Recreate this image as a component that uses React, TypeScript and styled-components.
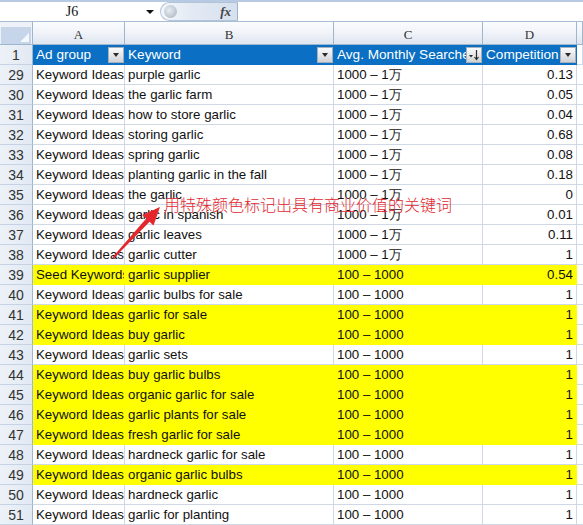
import React from "react";
import styled, { createGlobalStyle } from "styled-components";

const GlobalStyle = createGlobalStyle`
  html, body { margin: 0; padding: 0; background: #ffffff; overflow: hidden; }
  #root { width: 583px; height: 525px; position: relative; overflow: hidden; }
`;

const COLS = "33px 92px 209px 149px 94px 1fr";
const GRID = "#d0d7e5";
const HEAD_LINE = "#9eb6ce";
const YELLOW = "#ffff00";
const BLUE = "#0b6fc3";
const CELL_FONT = `"Liberation Sans", Arial, sans-serif`;
const SERIF = `"Liberation Serif", "Times New Roman", serif`;

const Sheet = styled.div`
  width: 583px;
  height: 525px;
  position: relative;
  overflow: hidden;
`;

const FormulaBar = styled.div`
  display: flex;
  align-items: stretch;
  height: 19px;
  border-top: 2px solid #b7cae4;
  border-bottom: 1px solid #a9bdd8;
  background: #ffffff;
`;

const NameBox = styled.div`
  width: 140px;
  display: flex;
  align-items: center;
  justify-content: center;
  font-family: ${SERIF};
  font-size: 14px;
  color: #111;
  padding-left: 2px;
`;

const DropArrow = styled.div`
  width: 16px;
  display: flex;
  align-items: center;
  justify-content: center;
  &::after {
    content: "";
    border-left: 4px solid transparent;
    border-right: 4px solid transparent;
    border-top: 4px solid #111;
  }
`;

const FxCapsule = styled.div`
  width: 78px;
  margin-left: 2px;
  display: flex;
  align-items: center;
  justify-content: space-between;
  border: 1px solid #b3c3d8;
  border-right: 1px solid #9fb2cc;
  border-radius: 10px 0 0 10px;
  background: linear-gradient(90deg, #f4f7fb 0%, #e3eaf4 40%, #d6e0ee 100%);
  box-sizing: border-box;
  padding: 0 6px 0 3px;
`;

const Knob = styled.div`
  width: 13px;
  height: 13px;
  border-radius: 50%;
  background: radial-gradient(circle at 40% 40%, #e9edf2 0%, #b9c1cc 70%, #a4adba 100%);
`;

const FxLabel = styled.span`
  font-family: ${SERIF};
  font-style: italic;
  font-weight: bold;
  font-size: 13px;
  color: #444;
`;

const FormulaInput = styled.div`
  flex: 1;
  background: #ffffff;
`;

const Row = styled.div`
  display: grid;
  grid-template-columns: ${COLS};
  height: 20px;
`;

const HeaderRow = styled(Row)`
  height: 23px;
`;

const Corner = styled.div`
  box-sizing: border-box;
  border-right: 1px solid ${HEAD_LINE};
  border-bottom: 1px solid ${HEAD_LINE};
  background: #eef2f8;
  padding: 5px 1px 0 1px;
  display: flex;
`;

const CornerInner = styled.div`
  flex: 1;
  background: #c7d5ea;
  position: relative;
  &::after {
    content: "";
    position: absolute;
    right: 2px;
    bottom: 2px;
    border-left: 9px solid transparent;
    border-bottom: 9px solid #f4f7fb;
  }
`;

const ColHead = styled.div`
  box-sizing: border-box;
  border-right: 1px solid ${HEAD_LINE};
  border-bottom: 1px solid ${HEAD_LINE};
  background: linear-gradient(180deg, #fbfcfe 0%, #f1f4f9 45%, #dfe6f0 100%);
  font-family: ${SERIF};
  font-size: 13px;
  color: #333;
  display: flex;
  align-items: center;
  justify-content: center;
  padding-top: 3px;
`;

const RowNum = styled.div`
  box-sizing: border-box;
  border-right: 1px solid ${HEAD_LINE};
  border-bottom: 1px solid #c6d3e4;
  background: linear-gradient(90deg, #edf2f8 0%, #e2e9f3 100%);
  font-family: ${CELL_FONT};
  font-size: 14px;
  color: #333;
  display: flex;
  align-items: center;
  justify-content: center;
  padding-top: 1px;
`;

const Cell = styled.div<{ $fill?: string; $right?: boolean }>`
  box-sizing: border-box;
  border-right: 1px solid ${(p) => p.$fill ?? GRID};
  border-bottom: 1px solid ${(p) => p.$fill ?? GRID};
  background: ${(p) => p.$fill ?? "#ffffff"};
  font-family: ${CELL_FONT};
  font-size: 13.3px;
  color: #111;
  line-height: 19px;
  padding: 0 3px;
  white-space: nowrap;
  overflow: hidden;
  text-align: ${(p) => (p.$right ? "right" : "left")};
`;

const TitleCell = styled.div<{ $plain?: boolean }>`
  box-sizing: border-box;
  display: flex;
  align-items: center;
  background: ${(p) => (p.$plain ? "#ffffff" : BLUE)};
  border-bottom: 1px solid ${(p) => (p.$plain ? GRID : BLUE)};
  border-right: 1px solid ${(p) => (p.$plain ? GRID : BLUE)};
  padding-left: 3px;
  overflow: hidden;
`;

const TitleText = styled.span`
  flex: 1;
  min-width: 0;
  overflow: hidden;
  white-space: nowrap;
  font-family: ${CELL_FONT};
  font-size: 13.6px;
  color: #ffffff;
`;

const FilterButton = styled.div`
  flex: none;
  width: 16px;
  height: 16px;
  box-sizing: border-box;
  border: 1px solid #a8b0bb;
  background: linear-gradient(180deg, #fbfbfb 0%, #e6e7e9 50%, #cfd2d6 100%);
  display: flex;
  align-items: center;
  justify-content: center;
`;

const Caret = styled.span`
  width: 0;
  height: 0;
  border-left: 3.5px solid transparent;
  border-right: 3.5px solid transparent;
  border-top: 4px solid #2b2b2b;
  margin-top: 1px;
`;

const Overlay = styled.div`
  position: absolute;
  left: 0;
  top: 0;
  width: 583px;
  height: 525px;
  pointer-events: none;
`;

const Note = styled.div`
  position: absolute;
  left: 164px;
  top: 192px;
  font-family: "Noto Sans CJK SC", "Noto Sans", sans-serif;
  font-size: 16px;
  font-weight: 300;
  color: #e4262d;
  white-space: nowrap;
`;

const ArrowSvg = styled.svg`
  position: absolute;
  left: 0;
  top: 0;
`;

type DataRow = [number, string, string, string, string, boolean];

const HI = "1000 – 1万";
const LO = "100 – 1000";
const KI = "Keyword Ideas";

const rows: DataRow[] = [
  [29, KI, "purple garlic", HI, "0.13", false],
  [30, KI, "the garlic farm", HI, "0.05", false],
  [31, KI, "how to store garlic", HI, "0.04", false],
  [32, KI, "storing garlic", HI, "0.68", false],
  [33, KI, "spring garlic", HI, "0.08", false],
  [34, KI, "planting garlic in the fall", HI, "0.18", false],
  [35, KI, "the garlic", HI, "0", false],
  [36, KI, "garlic in spanish", HI, "0.01", false],
  [37, KI, "garlic leaves", HI, "0.11", false],
  [38, KI, "garlic cutter", HI, "1", false],
  [39, "Seed Keywords", "garlic supplier", LO, "0.54", true],
  [40, KI, "garlic bulbs for sale", LO, "1", false],
  [41, KI, "garlic for sale", LO, "1", true],
  [42, KI, "buy garlic", LO, "1", true],
  [43, KI, "garlic sets", LO, "1", false],
  [44, KI, "buy garlic bulbs", LO, "1", true],
  [45, KI, "organic garlic for sale", LO, "1", true],
  [46, KI, "garlic plants for sale", LO, "1", true],
  [47, KI, "fresh garlic for sale", LO, "1", true],
  [48, KI, "hardneck garlic for sale", LO, "1", false],
  [49, KI, "organic garlic bulbs", LO, "1", true],
  [50, KI, "hardneck garlic", LO, "1", false],
  [51, KI, "garlic for planting", LO, "1", false],
  [52, KI, "elephant garlic bulbs", LO, "1", true],
];

function SortIcon() {
  return (
    <svg width="12" height="12" viewBox="0 0 12 12">
      <path d="M1 6 L5 6 L3 8.5 Z" fill="#2b2b2b" />
      <path d="M8.5 1 L8.5 10" stroke="#2b2b2b" strokeWidth="1.2" />
      <path d="M6.5 8 L8.5 10.5 L10.5 8" stroke="#2b2b2b" strokeWidth="1.2" fill="none" />
    </svg>
  );
}

export default function App() {
  return (
    <>
      <GlobalStyle />
      <Sheet>
        <FormulaBar>
          <NameBox>J6</NameBox>
          <DropArrow />
          <FxCapsule>
            <Knob />
            <FxLabel>fx</FxLabel>
          </FxCapsule>
          <FormulaInput />
        </FormulaBar>

        <HeaderRow>
          <Corner>
            <CornerInner />
          </Corner>
          <ColHead>A</ColHead>
          <ColHead>B</ColHead>
          <ColHead>C</ColHead>
          <ColHead>D</ColHead>
          <ColHead />
        </HeaderRow>

        <Row>
          <RowNum>1</RowNum>
          <TitleCell>
            <TitleText>Ad group</TitleText>
            <FilterButton>
              <Caret />
            </FilterButton>
          </TitleCell>
          <TitleCell>
            <TitleText>Keyword</TitleText>
            <FilterButton>
              <Caret />
            </FilterButton>
          </TitleCell>
          <TitleCell>
            <TitleText>Avg. Monthly Searches (exact match only)</TitleText>
            <FilterButton>
              <SortIcon />
            </FilterButton>
          </TitleCell>
          <TitleCell>
            <TitleText>Competition</TitleText>
            <FilterButton>
              <Caret />
            </FilterButton>
          </TitleCell>
          <TitleCell $plain />
        </Row>

        {rows.map(([n, group, kw, vol, comp, hl]) => {
          const fill = hl ? YELLOW : undefined;
          return (
            <Row key={n}>
              <RowNum>{n}</RowNum>
              <Cell $fill={fill}>{group}</Cell>
              <Cell $fill={fill}>{kw}</Cell>
              <Cell $fill={fill}>{vol}</Cell>
              <Cell $fill={fill} $right>
                {comp}
              </Cell>
              <Cell />
            </Row>
          );
        })}

        <Overlay>
          <Note>用特殊颜色标记出具有商业价值的关键词</Note>
          <ArrowSvg width="583" height="525" viewBox="0 0 583 525">
            <polygon
              points="160,207 153.5,225.5 149.6,221.8 113.6,258.6 112.4,257.4 146.2,218.6 142.2,215"
              fill="#e4262d"
            />
          </ArrowSvg>
        </Overlay>
      </Sheet>
    </>
  );
}
